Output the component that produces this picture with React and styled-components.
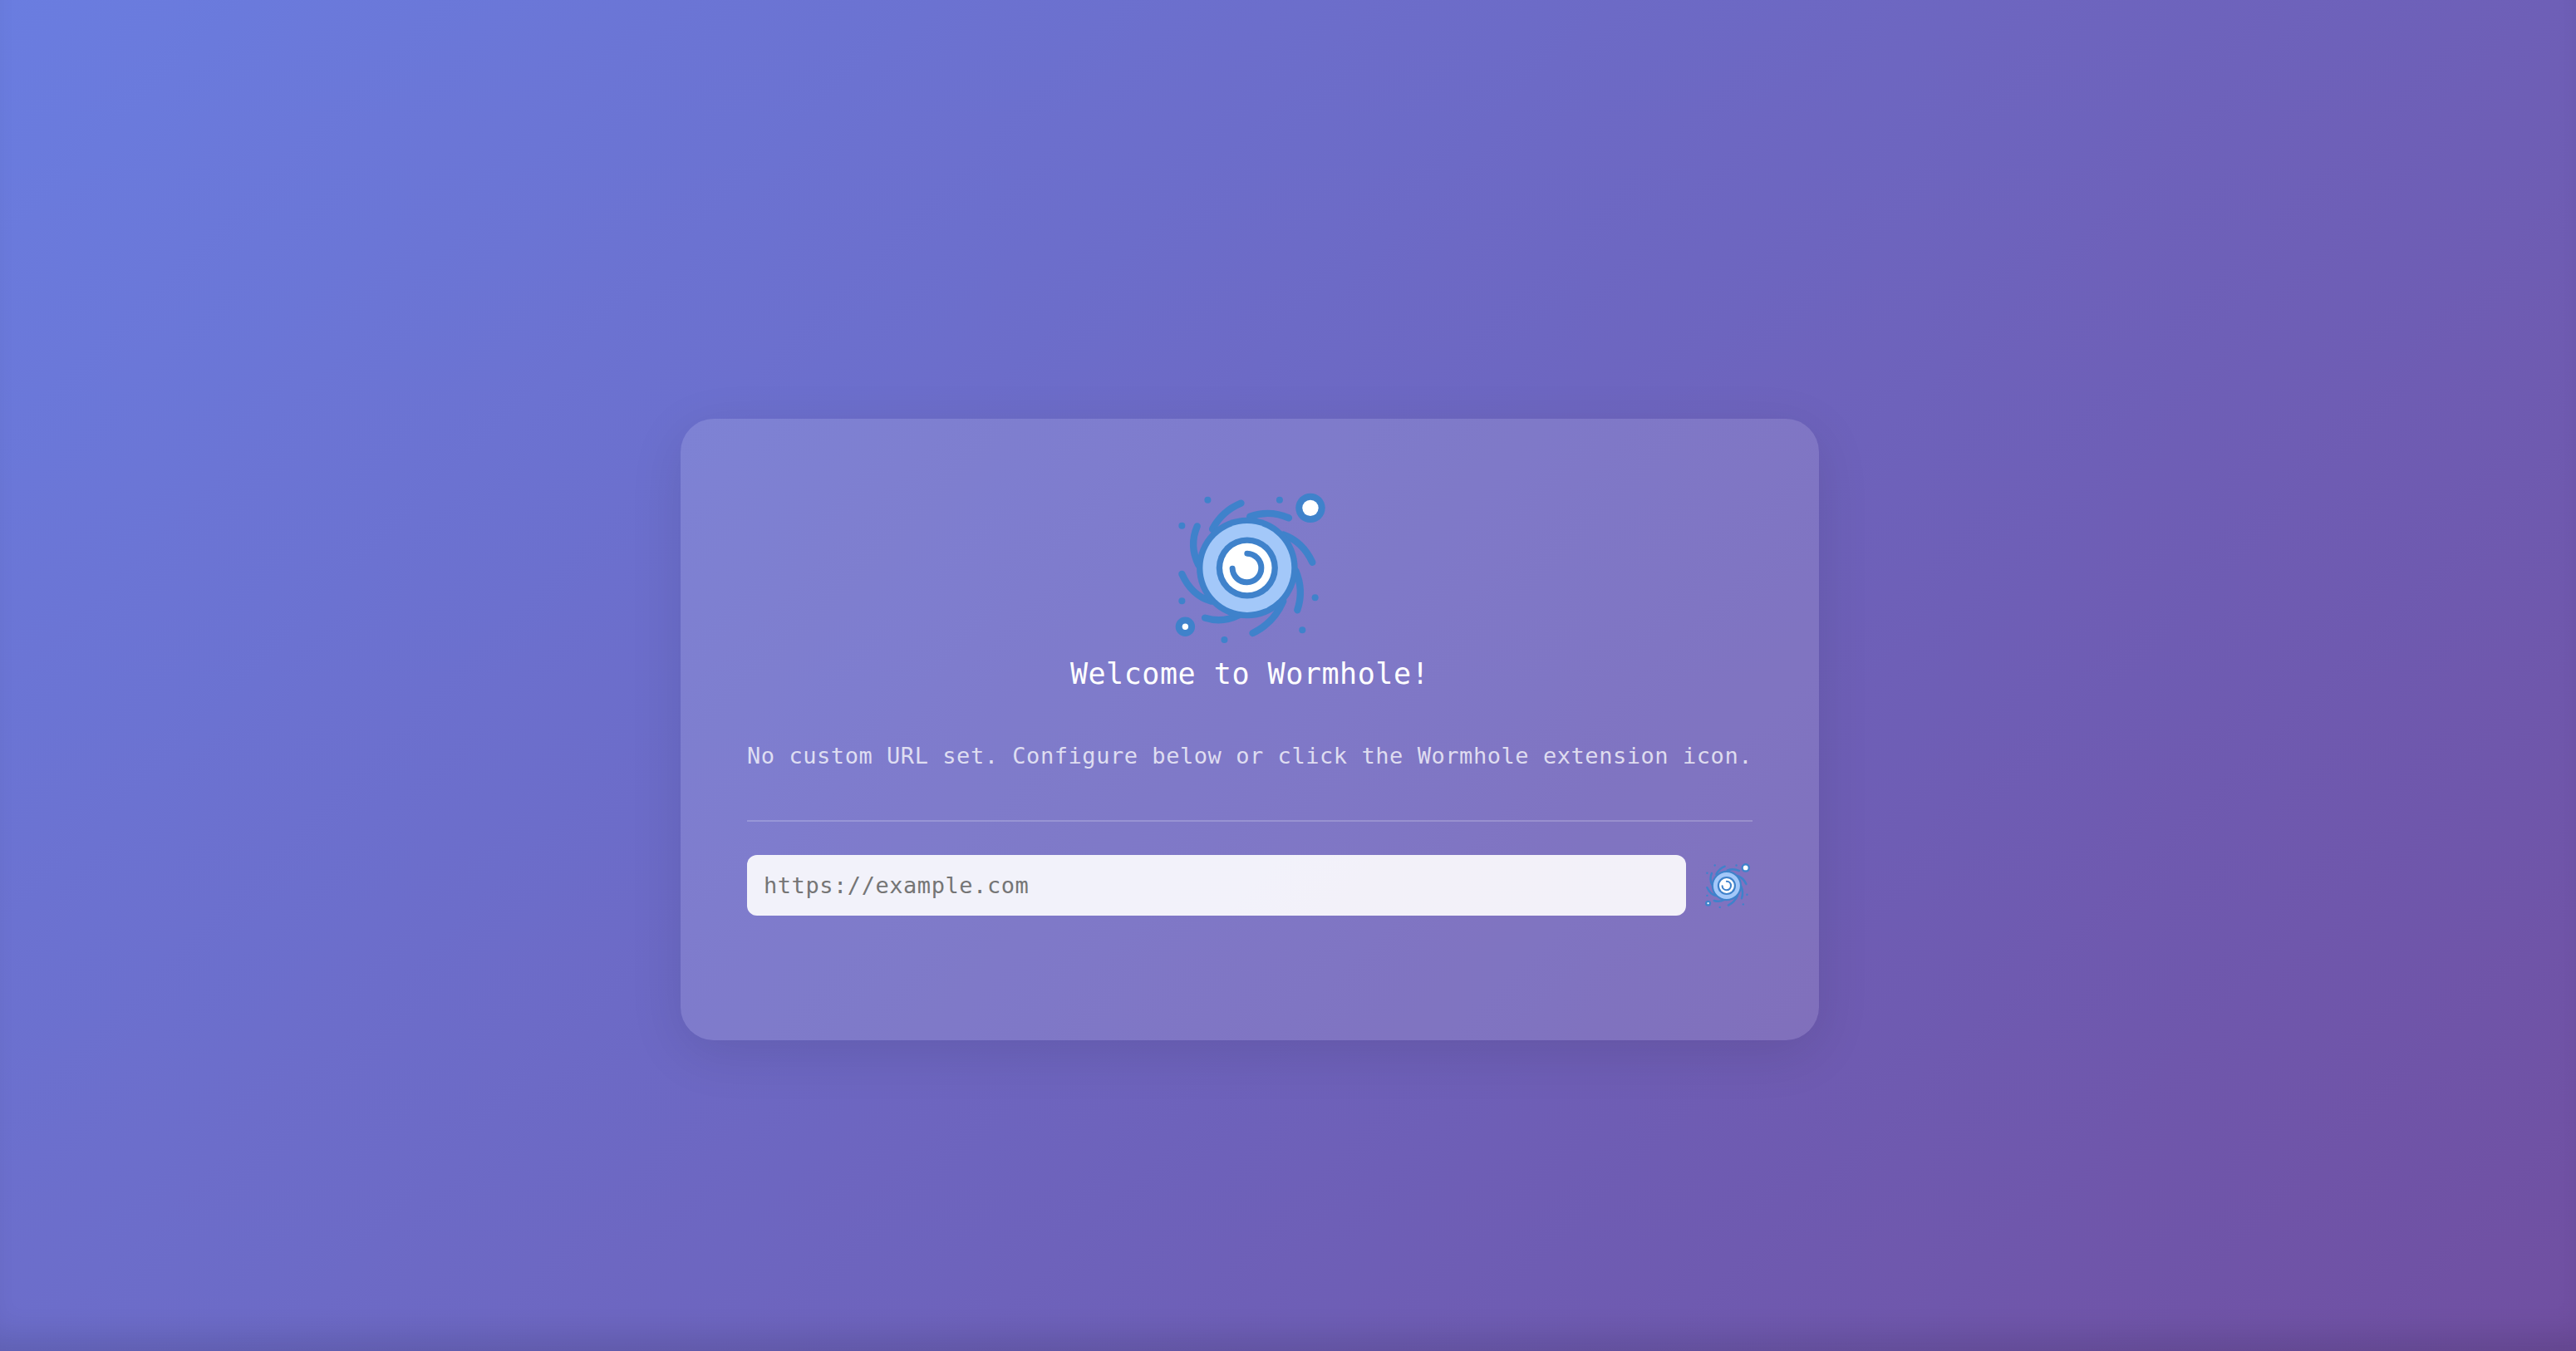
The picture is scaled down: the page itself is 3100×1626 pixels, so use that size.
import styled, { createGlobalStyle } from 'styled-components';

const GlobalStyle = createGlobalStyle`
  html, body {
    margin: 0;
    padding: 0;
  }

  body {
    font-family: 'DejaVu Sans Mono', 'Liberation Mono', monospace;
  }
`;

const Page = styled.main`
  box-sizing: border-box;
  width: 100%;
  height: 1626px;
  overflow: hidden;
  display: flex;
  justify-content: center;
  align-items: center;
  padding: 130px 92px 0 0;
  background: linear-gradient(135deg, #6a7de0 0%, #704fa1 100%);
  box-shadow: inset 0 -36px 36px -18px rgba(0, 0, 0, 0.12);
`;

const Card = styled.section`
  box-sizing: border-box;
  width: 1370px;
  height: 748px;
  padding: 86px 80px 0;
  border-radius: 40px;
  background: rgba(255, 255, 255, 0.125);
  box-shadow: 0 16px 64px rgba(0, 0, 0, 0.1);
  display: flex;
  flex-direction: column;
`;

const LogoSlot = styled.div`
  display: flex;
  justify-content: center;
`;

const Title = styled.h1`
  margin: 13px 0 0;
  font-size: 35px;
  letter-spacing: 0.54px;
  line-height: 43px;
  font-weight: 400;
  text-align: center;
  color: #fff;
`;

const Message = styled.p`
  margin: 60px 0 0;
  font-size: 27px;
  letter-spacing: 0.55px;
  line-height: 34px;
  white-space: nowrap;
  text-align: center;
  color: rgba(255, 255, 255, 0.75);
`;

const Rule = styled.hr`
  width: 100%;
  height: 2px;
  margin: 60px 0 0;
  border: 0;
  background: rgba(255, 255, 255, 0.2);
`;

const UrlRow = styled.form`
  display: flex;
  align-items: center;
  gap: 16px;
  margin-top: 40px;
`;

const UrlInput = styled.input`
  box-sizing: border-box;
  flex: 1;
  min-width: 0;
  height: 73px;
  padding: 0 20px;
  border: 0;
  border-radius: 12px;
  background: rgba(255, 255, 255, 0.9);
  font-family: inherit;
  font-size: 27px;
  letter-spacing: 0.55px;
  color: #333;
  outline: none;

  &::placeholder {
    color: #757575;
    opacity: 1;
  }
`;

const SaveButton = styled.button`
  box-sizing: border-box;
  width: 64px;
  height: 64px;
  padding: 0 0 0 4px;
  border: 0;
  background: transparent;
  cursor: pointer;
  display: flex;
  align-items: center;
  justify-content: center;
`;

const BLUE = '#3f82cb';

const arms = [
  'M205 170 Q240 105 308 77',
  'M340 125 Q410 100 480 130',
  'M460 190 Q530 215 565 290',
  'M505 320 Q535 390 511 462',
  'M460 430 Q425 510 350 545',
  'M300 480 Q240 510 178 490',
  'M200 430 Q130 410 95 332',
  'M155 300 Q120 230 150 160',
];

const specks = [
  [188, 65],
  [447, 65],
  [95, 158],
  [95, 429],
  [575, 417],
  [529, 534],
  [248, 569],
];

const WormholeLogo = ({ size }) => (
  <svg width={size} height={size} viewBox="61 30 560 560" fill="none">
    {arms.map((d) => (
      <path key={d} d={d} stroke={BLUE} strokeWidth="25" strokeLinecap="round" />
    ))}
    {specks.map(([cx, cy]) => (
      <circle key={cx} cx={cx} cy={cy} r="12" fill={BLUE} />
    ))}
    <circle cx="558" cy="94" r="53" fill={BLUE} />
    <circle cx="558" cy="94" r="29" fill="#fff" />
    <circle cx="107" cy="522" r="35" fill={BLUE} />
    <circle cx="107" cy="522" r="11" fill="#fff" />
    <circle cx="330" cy="310" r="182" fill={BLUE} />
    <circle cx="330" cy="310" r="160" fill="#a3c8f9" />
    <circle cx="330" cy="310" r="111" fill={BLUE} />
    <circle cx="330" cy="310" r="89" fill="#fff" />
    <path
      d="M330 258 A52 52 0 1 1 277 312"
      stroke={BLUE}
      strokeWidth="21"
      strokeLinecap="round"
    />
  </svg>
);

export default function App() {
  return (
    <>
      <GlobalStyle />
      <Page>
        <Card>
          <LogoSlot>
            <WormholeLogo size={187} />
          </LogoSlot>
          <Title>Welcome to Wormhole!</Title>
          <Message>No custom URL set. Configure below or click the Wormhole extension icon.</Message>
          <Rule />
          <UrlRow>
            <UrlInput type="url" placeholder="https://example.com" />
            <SaveButton type="button" aria-label="Save URL">
              <WormholeLogo size={56} />
            </SaveButton>
          </UrlRow>
        </Card>
      </Page>
    </>
  );
}
